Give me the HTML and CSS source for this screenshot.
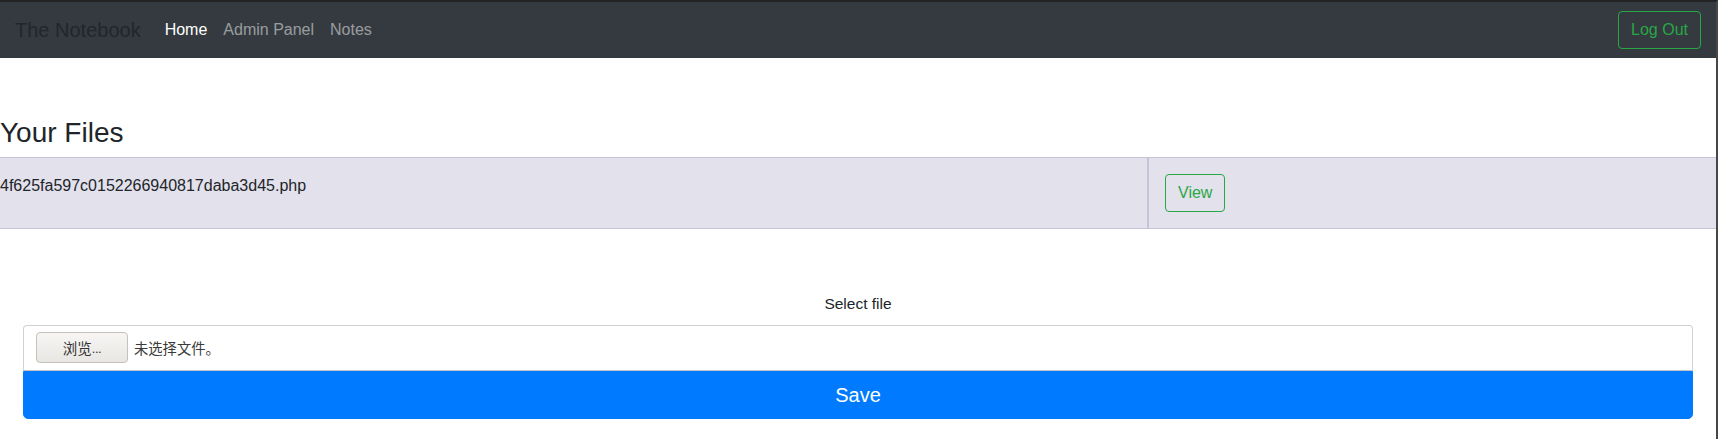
FILE: index.html
```html
<!DOCTYPE html>
<html lang="en">
<head>
<meta charset="utf-8">
<title>The Notebook</title>
<link rel="stylesheet" href="styles.css">
</head>
<body>
<div class="frame">
  <nav class="navbar">
    <a class="brand" href="#">The Notebook</a>
    <ul class="nav">
      <li><a class="nav-link active" href="#">Home</a></li>
      <li><a class="nav-link" href="#">Admin Panel</a></li>
      <li><a class="nav-link" href="#">Notes</a></li>
    </ul>
    <a class="btn btn-outline-success logout" href="#">Log Out</a>
  </nav>

  <main class="main">
    <h3 class="title">Your Files</h3>
    <div class="files">
      <div class="cell cell-name">4f625fa597c0152266940817daba3d45.php</div>
      <div class="cell cell-action"><a class="btn btn-outline-success" href="#">View</a></div>
    </div>

    <form class="upload">
      <label class="upload-label">Select file</label>
      <div class="file-box">
        <span class="browse">浏览<span class="dots">...</span></span>
        <span class="file-status">未选择文件。</span>
      </div>
      <button type="button" class="btn-save">Save</button>
    </form>
  </main>
</div>
</body>
</html>
```

FILE: styles.css
```css
* {
  box-sizing: border-box;
}

html, body {
  margin: 0;
  padding: 0;
  background: #fff;
}

body {
  font-family: "Liberation Sans", Arial, "Noto Sans CJK SC", sans-serif;
  font-size: 16px;
  line-height: 1.5;
  color: #212529;
}

.frame {
  height: 439px;
  border-top: 2px solid #232323;
  border-right: 2px solid #474747;
}

a {
  text-decoration: none;
}

.navbar {
  display: flex;
  align-items: center;
  height: 56px;
  padding: 8px 15px;
  background: #343a40;
}

.brand {
  font-size: 20px;
  line-height: 30px;
  padding: 5px 0;
  margin-right: 16px;
  color: #22262a;
}

.nav {
  display: flex;
  list-style: none;
  margin: 0;
  padding: 0;
  flex: 1;
}

.nav-link {
  display: block;
  padding: 8px;
  color: rgba(255, 255, 255, 0.5);
}

.nav-link.active {
  color: #fff;
}

.btn {
  display: inline-block;
  padding: 6px 12px;
  font-size: 16px;
  line-height: 24px;
  border: 1px solid transparent;
  border-radius: 4px;
}

.btn-outline-success {
  color: #28a745;
  border-color: #28a745;
  background: transparent;
}

.main {
  padding-top: 58px;
}

.title {
  margin: 0 0 7px;
  font-size: 28px;
  font-weight: 500;
  line-height: 1.2;
  color: #212529;
}

.files {
  display: grid;
  grid-template-columns: 1149px 1fr;
  background: #e3e1ec;
  border-top: 1px solid #c8c3d9;
  border-bottom: 1px solid #c8c3d9;
}

.cell {
  padding: 16px;
}

.cell-name {
  padding-left: 0;
  border-right: 2px solid #c8c3d9;
}

.upload {
  margin-top: 63px;
  padding: 0 23px;
  display: flex;
  flex-direction: column;
}

.upload-label {
  text-align: center;
  font-size: 15.5px;
  line-height: 24px;
  margin-bottom: 9px;
}

.file-box {
  display: flex;
  align-items: center;
  gap: 6px;
  height: 46px;
  padding: 6px 12px;
  border: 1px solid #d0d0d4;
  border-bottom-color: #c6c6ca;
  border-radius: 4px 4px 0 0;
  font-family: "Noto Sans CJK SC", "Liberation Sans", sans-serif;
  font-size: 14px;
  color: #333;
}

.browse {
  width: 92px;
  height: 31px;
  display: flex;
  align-items: center;
  justify-content: center;
  border: 1px solid #c5c1bc;
  border-radius: 4px;
  background: linear-gradient(#f6f5f3, #e9e7e4);
  color: #333;
  font-size: 14.5px;
}

.dots {
  font-family: "Liberation Sans", Arial, sans-serif;
  font-size: 13px;
  letter-spacing: -0.5px;
  padding-top: 2px;
}

.file-status {
  font-size: 14.3px;
  color: #3a3a3a;
}

.btn-save {
  height: 48px;
  border: 1px solid #007bff;
  background: #007bff;
  color: #fff;
  font-family: "Liberation Sans", Arial, sans-serif;
  font-size: 20px;
  line-height: 30px;
  padding: 8px 16px;
  border-radius: 0 0 5px 5px;
}
```
